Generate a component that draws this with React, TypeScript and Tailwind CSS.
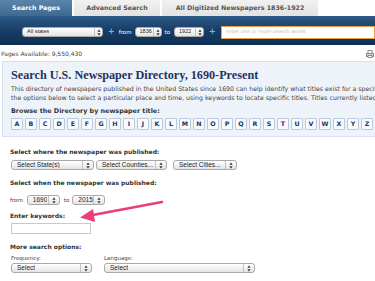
import React from "react";

function Arrows() {
  return (
    <svg width="4" height="7" viewBox="0 0 4 7" className="shrink-0">
      <path d="M2 0.5 L3.6 2.8 L0.4 2.8 Z" fill="#333" />
      <path d="M2 6.5 L3.6 4.2 L0.4 4.2 Z" fill="#333" />
    </svg>
  );
}

function Sel({ label, className, small }: { label: string; className: string; small?: boolean }) {
  const base = small
    ? "flex items-center justify-between rounded-[3px] border border-[#a9a9a9] bg-gradient-to-b from-white to-[#e4e4e4] pl-[4px] pr-[1px] text-[5.5px] leading-none text-[#222] font-['Liberation_Sans',Arial,sans-serif] "
    : "flex items-center justify-between rounded-[3px] border border-[#a9a9a9] bg-gradient-to-b from-white to-[#e4e4e4] pl-[5px] pr-[2px] text-[6.5px] leading-none text-[#222] font-['Liberation_Sans',Arial,sans-serif] ";
  return (
    <div className={base + className}>
      <span className="whitespace-nowrap overflow-hidden">{label}</span>
      <span
        className={
          small
            ? "flex items-center h-full border-l border-[#c4c4c4] pl-[2px]"
            : "flex items-center h-full border-l border-[#c4c4c4] pl-[3px] pr-[1px]"
        }
      >
        <Arrows />
      </span>
    </div>
  );
}

const letters = "ABCDEFGHIJKLMNOPQRSTUVWXYZ".split("");

export default function App() {
  return (
    <div className="relative w-[375px] h-[281px] overflow-hidden bg-white font-['DejaVu_Sans',Verdana,sans-serif] text-[#333]">
      {/* Tabs */}
      <div className="flex h-[16px] items-stretch gap-[2px]">
        <div className="w-[72px] flex items-center justify-center bg-gradient-to-b from-[#5a86ad] to-[#3d6991] text-white font-bold text-[6.3px]">
          Search Pages
        </div>
        <div className="w-[86px] flex items-center justify-center bg-gradient-to-b from-[#f2f2f2] to-[#e2e2e2] text-[#555] font-bold text-[6.3px]">
          Advanced Search
        </div>
        <div className="w-[156px] flex items-center justify-center bg-gradient-to-b from-[#f2f2f2] to-[#e2e2e2] text-[#555] font-bold text-[6.3px]">
          All Digitized Newspapers 1836-1922
        </div>
      </div>

      {/* Dark search bar */}
      <div className="h-[29px] bg-gradient-to-b from-[#2d5a87] via-[#173d66] to-[#0f2f52] flex items-center pl-[22px] text-[6px]">
        <Sel label="All states" className="w-[81px] h-[10px] mt-[3px]" small />
        <span className="ml-[5px] mt-[3px] text-[#7fb4e6] font-bold text-[8px] leading-none">+</span>
        <span className="ml-[4px] mt-[3px] text-white text-[5.5px]">from</span>
        <Sel label="1836" className="ml-[3px] w-[27px] h-[10px] mt-[3px]" small />
        <span className="ml-[3px] mt-[3px] text-white text-[5.5px]">to</span>
        <Sel label="1922" className="ml-[4px] w-[30px] h-[10px] mt-[3px]" small />
        <span className="ml-[5px] mt-[3px] text-[#7fb4e6] font-bold text-[8px] leading-none">+</span>
        <div className="ml-[5px] mt-[3px] flex-1 h-[13px] bg-white border border-[#e7a04a] flex items-center pl-[4px] text-[5px] text-[#bbb] whitespace-nowrap">
          enter one or more search words
        </div>
      </div>

      {/* Pages available */}
      <div className="h-[16px] flex items-center justify-between pl-[1px] pr-[1px] text-[6px] text-[#444]">
        <span>Pages Available: 9,550,430</span>
        <svg width="8" height="8" viewBox="0 0 8 8" className="mt-[1px]">
          <rect x="2" y="0.5" width="4" height="3" fill="none" stroke="#777" strokeWidth="0.8" />
          <rect x="0.5" y="3.5" width="7" height="3" fill="#ddd" stroke="#777" strokeWidth="0.8" />
          <rect x="2" y="5.5" width="4" height="2" fill="#fff" stroke="#777" strokeWidth="0.8" />
        </svg>
      </div>

      {/* Directory box */}
      <div className="ml-[2px] h-[76px] w-[400px] bg-[#eef3fa] border border-[#d5e1ef] pl-[8px] pt-[5px] overflow-hidden">
        <div className="font-['Liberation_Serif',Georgia,serif] font-bold text-[12.2px] leading-[16px] text-[#24325f] whitespace-nowrap">
          Search U.S. Newspaper Directory, 1690-Present
        </div>
        <div className="mt-[1px] text-[6.25px] leading-[9px] text-[#444] whitespace-nowrap">
          <div>This directory of newspapers published in the United States since 1690 can help identify what titles exist for a specific place and time,</div>
          <div>the options below to select a particular place and time, using keywords to locate specific titles. Titles currently listed in the directory</div>
        </div>
        <div className="mt-[5px] text-[6.4px] leading-[9px] font-bold text-[#333] whitespace-nowrap">
          Browse the Directory by newspaper title:
        </div>
        <div className="mt-[2px] flex gap-[2px]">
          {letters.map((l) => (
            <div
              key={l}
              className="w-[12px] h-[12px] flex items-center justify-center bg-[#f8fafd] border border-[#b9c9dd] rounded-[1px] text-[6.3px] font-bold text-[#1f3366]"
            >
              {l}
            </div>
          ))}
        </div>
      </div>

      {/* Form area */}
      <div className="pl-[10px] pt-[11px]">
        <div className="text-[6px] leading-[8px] font-bold text-[#333]">
          Select where the newspaper was published:
        </div>
        <div className="mt-[4px] flex items-center pl-[1px]">
          <Sel label="Select State(s)" className="w-[83px] h-[10px]" />
          <Sel label="Select Counties..." className="ml-[2px] w-[71px] h-[10px]" />
          <Sel label="Select Cities..." className="ml-[6px] w-[64px] h-[10px]" />
        </div>
        <div className="mt-[9px] text-[6px] leading-[8px] font-bold text-[#333]">
          Select when the newspaper was published:
        </div>
        <div className="mt-[8px] flex items-center text-[5.5px] text-[#444]">
          <span>from</span>
          <Sel label="1690" className="ml-[4px] w-[33px] h-[10px]" />
          <span className="ml-[4px]">to</span>
          <Sel label="2015" className="ml-[3px] w-[33px] h-[10px]" />
        </div>
        <div className="mt-[7px] text-[6px] leading-[8px] font-bold text-[#333]">Enter keywords:</div>
        <div className="mt-[3px] ml-[1px] w-[80px] h-[11px] bg-white border border-[#c9c9c9]" />
        <div className="mt-[9px] text-[6px] leading-[8px] font-bold text-[#333]">More search options:</div>
        <div className="mt-[3px] flex pl-[1px]">
          <div className="w-[93px]">
            <div className="text-[5.5px] leading-[8px] text-[#444]">Frequency:</div>
            <Sel label="Select" className="mt-[1px] w-[81px] h-[10px]" />
          </div>
          <div>
            <div className="text-[5.5px] leading-[8px] text-[#444]">Language:</div>
            <Sel label="Select" className="mt-[1px] w-[151px] h-[10px]" />
          </div>
        </div>
      </div>

      {/* Pink annotation arrow */}
      <svg className="absolute left-[76px] top-[196px]" width="92" height="30" viewBox="0 0 92 30">
        <path d="M86 6 L14 19.5" stroke="#ea3d7b" strokeWidth="2.6" strokeLinecap="round" fill="none" />
        <path d="M4 21.5 L17 13 L19 26 Z" fill="#ea3d7b" />
      </svg>
    </div>
  );
}
